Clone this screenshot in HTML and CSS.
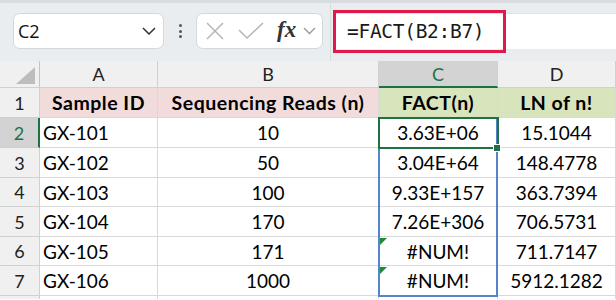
FILE: index.html
```html
<!DOCTYPE html>
<html>
<head>
<meta charset="utf-8">
<link rel="stylesheet" href="styles.css">
</head>
<body>
<div class="toolbar">
  <div class="namebox">
    <span class="name">C2</span>
    <svg class="chev" width="14" height="8" viewBox="0 0 14 8"><path d="M1 1 L7 7 L13 1" fill="none" stroke="#333" stroke-width="1.5"/></svg>
  </div>
  <div class="dots"><i></i><i></i><i></i></div>
  <div class="fxbox">
    <svg width="18" height="18" viewBox="0 0 18 18"><path d="M1 1 L17 17 M17 1 L1 17" stroke="#b5b5b5" stroke-width="1.5" fill="none"/></svg>
    <svg width="26" height="18" viewBox="0 0 26 18"><path d="M1 8 L9 16 L25 1" stroke="#b5b5b5" stroke-width="1.5" fill="none"/></svg>
    <span class="fx">fx</span>
    <svg class="chev2" width="13" height="8" viewBox="0 0 13 8"><path d="M1 1 L6.5 6.5 L12 1" fill="none" stroke="#999" stroke-width="1.4"/></svg>
  </div>
  <div class="sep"></div>
  <div class="formula">
    <span class="ftext">=FACT(B2:B7)</span>
  </div>
</div>
<div class="sheet">
  <div class="grid">
    <div class="ch corner"><span class="tri"></span></div>
    <div class="ch">A</div>
    <div class="ch">B</div>
    <div class="ch sel">C</div>
    <div class="ch">D</div>

    <div class="rh">1</div>
    <div class="c hd pink">Sample ID</div>
    <div class="c hd pink">Sequencing Reads (n)</div>
    <div class="c hd green">FACT(n)</div>
    <div class="c hd green">LN of n!</div>

    <div class="rh rsel">2</div>
    <div class="c l">GX-101</div>
    <div class="c">10</div>
    <div class="c">3.63E+06</div>
    <div class="c">15.1044</div>

    <div class="rh">3</div>
    <div class="c l">GX-102</div>
    <div class="c">50</div>
    <div class="c">3.04E+64</div>
    <div class="c">148.4778</div>

    <div class="rh">4</div>
    <div class="c l">GX-103</div>
    <div class="c">100</div>
    <div class="c">9.33E+157</div>
    <div class="c">363.7394</div>

    <div class="rh">5</div>
    <div class="c l">GX-104</div>
    <div class="c">170</div>
    <div class="c">7.26E+306</div>
    <div class="c">706.5731</div>

    <div class="rh">6</div>
    <div class="c l">GX-105</div>
    <div class="c">171</div>
    <div class="c err">#NUM!</div>
    <div class="c">711.7147</div>

    <div class="rh">7</div>
    <div class="c l">GX-106</div>
    <div class="c">1000</div>
    <div class="c err">#NUM!</div>
    <div class="c">5912.1282</div>

    <div class="rh tail"></div>
    <div class="c tail"></div>
    <div class="c tail"></div>
    <div class="c tail"></div>
    <div class="c tail"></div>
  </div>
  <div class="range"></div>
  <div class="active"></div>
  <div class="handle"></div>
</div>
</body>
</html>
```

FILE: styles.css
```css
* { box-sizing: border-box; }
html, body { margin: 0; padding: 0; overflow: hidden; }
body {
  width: 616px;
  height: 300px;
  background: #fff;
  font-family: Lato, "Liberation Sans", sans-serif;
}

.toolbar {
  height: 61px;
  background: #eaedf0;
  border-top: 3px solid #d9dcdf;
  display: flex;
  align-items: flex-start;
  padding-top: 10px;
  padding-left: 13px;
}

.namebox {
  width: 151px;
  height: 36px;
  background: #fff;
  border: 1px solid #d5d8db;
  border-radius: 7px;
  display: flex;
  align-items: center;
  justify-content: space-between;
  padding: 0 7px 0 4px;
}
.name {
  font-family: "Open Sans", "Noto Sans", sans-serif;
  font-size: 18px;
  color: #111;
}

.dots {
  width: 32px;
  height: 36px;
  display: flex;
  flex-direction: column;
  align-items: center;
  justify-content: center;
  gap: 2.5px;
}
.dots i {
  display: block;
  width: 3px;
  height: 3px;
  border-radius: 50%;
  background: #555;
}

.fxbox {
  width: 127px;
  height: 36px;
  background: #fff;
  border: 1px solid #d5d8db;
  border-radius: 7px;
  display: flex;
  align-items: center;
  padding-left: 9px;
  gap: 14px;
}
.fx {
  font-family: "Liberation Serif", "DejaVu Serif", serif;
  font-style: italic;
  font-weight: bold;
  font-size: 23px;
  color: #333;
  margin-left: -1px;
  margin-top: -3px;
}
.chev2 { margin-left: -7px; }

.sep {
  width: 1px;
  height: 58px;
  margin-top: -10px;
  margin-left: 7px;
  background: #dadde0;
}

.formula {
  flex: 1;
  height: 36px;
  margin-left: 2px;
  background: #fff;
  border-top: 1px solid #e0e2e5;
  display: flex;
  align-items: center;
}
.ftext {
  margin: -4px 0;
  height: 43px;
  width: 173px;
  border: 3px solid #df1a4b;
  display: flex;
  align-items: center;
  padding-left: 11px;
  font-family: "DejaVu Sans Mono", "Liberation Mono", monospace;
  font-size: 19.5px;
  letter-spacing: -0.3px;
  color: #1a1a1a;
}

.sheet {
  position: relative;
}

.grid {
  display: grid;
  grid-template-columns: 40px 118px 221px 119px 118px;
  grid-template-rows: 27px 30px 30px 30px 29px 30px 29px 30px 3px;
}

.ch, .rh {
  background: #f0f0f0;
  border-right: 1px solid #d0d0d0;
  border-bottom: 1px solid #d0d0d0;
  color: #222;
  font-size: 18px;
  display: flex;
  align-items: center;
  justify-content: center;
}
.rh.tail, .c.tail { border-bottom: 0; }
.ch.sel {
  background: #d3d3d3;
  color: #1e7145;
  border-bottom: 2px solid #1e7145;
}
.rh.rsel {
  background: #d3d3d3;
  color: #1e7145;
  border-right: 2px solid #1e7145;
}
.corner {
  position: relative;
  border-right: 1px solid #c4c4c4;
}
.tri {
  position: absolute;
  right: 4px;
  bottom: 3px;
  width: 0;
  height: 0;
  border-left: 19px solid transparent;
  border-bottom: 17px solid #bdbdbd;
}

.c {
  border-right: 1px solid #d9d9d9;
  border-bottom: 1px solid #d9d9d9;
  font-size: 19px;
  color: #000;
  display: flex;
  align-items: center;
  justify-content: center;
  position: relative;
  white-space: nowrap;
}
.c.l { justify-content: flex-start; padding-left: 3px; }
.c.hd { font-weight: bold; font-size: 19.5px; letter-spacing: 0.5px; }
.c.pink { background: #f2dcdb; }
.c.green { background: #d8e4bc; }
.c.err::before {
  content: "";
  position: absolute;
  left: 1px;
  top: 1px;
  width: 0;
  height: 0;
  border-top: 7px solid #1d8a3a;
  border-right: 7px solid transparent;
}

.range {
  position: absolute;
  left: 378px;
  top: 56px;
  width: 120px;
  height: 180px;
  border: 2px solid #5684c8;
}
.active {
  position: absolute;
  left: 378px;
  top: 56px;
  width: 121px;
  height: 32px;
  border: 2px solid #1e7145;
}
.handle {
  position: absolute;
  left: 493px;
  top: 83px;
  width: 8px;
  height: 8px;
  background: #1e7145;
  border: 1px solid #fff;
}
```
